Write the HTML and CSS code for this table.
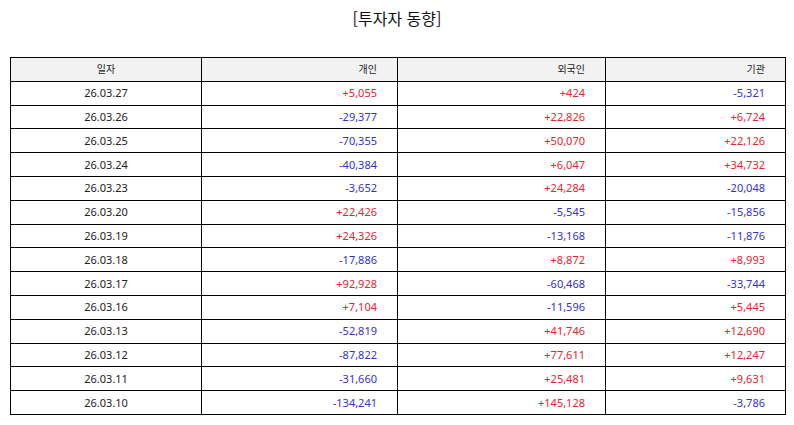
FILE: index.html
```html
<!DOCTYPE html>
<html lang="ko">
<head>
<meta charset="utf-8">
<link rel="stylesheet" href="styles.css">
</head>
<body>
<h1 class="title">[투자자 동향]</h1>
<table class="grid">
<colgroup><col class="c1"><col class="c2"><col class="c3"><col class="c4"></colgroup>
<thead>
<tr><th class="ctr">일자</th><th>개인</th><th>외국인</th><th>기관</th></tr>
</thead>
<tbody>
<tr><td class="ctr">26.03.27</td><td class="up">+5,055</td><td class="up">+424</td><td class="dn">-5,321</td></tr>
<tr><td class="ctr">26.03.26</td><td class="dn">-29,377</td><td class="up">+22,826</td><td class="up">+6,724</td></tr>
<tr><td class="ctr">26.03.25</td><td class="dn">-70,355</td><td class="up">+50,070</td><td class="up">+22,126</td></tr>
<tr><td class="ctr">26.03.24</td><td class="dn">-40,384</td><td class="up">+6,047</td><td class="up">+34,732</td></tr>
<tr><td class="ctr">26.03.23</td><td class="dn">-3,652</td><td class="up">+24,284</td><td class="dn">-20,048</td></tr>
<tr><td class="ctr">26.03.20</td><td class="up">+22,426</td><td class="dn">-5,545</td><td class="dn">-15,856</td></tr>
<tr><td class="ctr">26.03.19</td><td class="up">+24,326</td><td class="dn">-13,168</td><td class="dn">-11,876</td></tr>
<tr><td class="ctr">26.03.18</td><td class="dn">-17,886</td><td class="up">+8,872</td><td class="up">+8,993</td></tr>
<tr><td class="ctr">26.03.17</td><td class="up">+92,928</td><td class="dn">-60,468</td><td class="dn">-33,744</td></tr>
<tr><td class="ctr">26.03.16</td><td class="up">+7,104</td><td class="dn">-11,596</td><td class="up">+5,445</td></tr>
<tr><td class="ctr">26.03.13</td><td class="dn">-52,819</td><td class="up">+41,746</td><td class="up">+12,690</td></tr>
<tr><td class="ctr">26.03.12</td><td class="dn">-87,822</td><td class="up">+77,611</td><td class="up">+12,247</td></tr>
<tr><td class="ctr">26.03.11</td><td class="dn">-31,660</td><td class="up">+25,481</td><td class="up">+9,631</td></tr>
<tr><td class="ctr">26.03.10</td><td class="dn">-134,241</td><td class="up">+145,128</td><td class="dn">-3,786</td></tr>
</tbody>
</table>
</body>
</html>
```

FILE: styles.css
```css
html, body {
  margin: 0;
  padding: 0;
  background: #ffffff;
}
body {
  font-family: "Noto Sans", "Noto Sans CJK KR", sans-serif;
  color: #222222;
}
.title {
  margin: 0;
  padding-top: 6px;
  height: 57px;
  box-sizing: border-box;
  text-align: center;
  font-family: "Noto Sans CJK KR", sans-serif;
  font-weight: normal;
  font-size: 16px;
  line-height: 24px;
  color: #111111;
}
.grid {
  margin-left: 10px;
  width: 775px;
  border-collapse: collapse;
  table-layout: fixed;
  font-size: 11px;
}
.c1 { width: 191px; }
.c2 { width: 196px; }
.c3 { width: 208px; }
.c4 { width: 180px; }
.grid th, .grid td {
  border: 1px solid #000000;
  height: 23.8px;
  padding: 0 20px 0 4px;
  text-align: right;
  font-weight: normal;
  line-height: 14px;
  box-sizing: border-box;
}
.grid th {
  background: #f2f2f2;
  font-family: "Noto Sans CJK KR", sans-serif;
  font-size: 10px;
  color: #222222;
}
.grid .ctr {
  text-align: center;
  padding: 0;
}
.up { color: #e3262b; }
.dn { color: #3333cc; }
```
